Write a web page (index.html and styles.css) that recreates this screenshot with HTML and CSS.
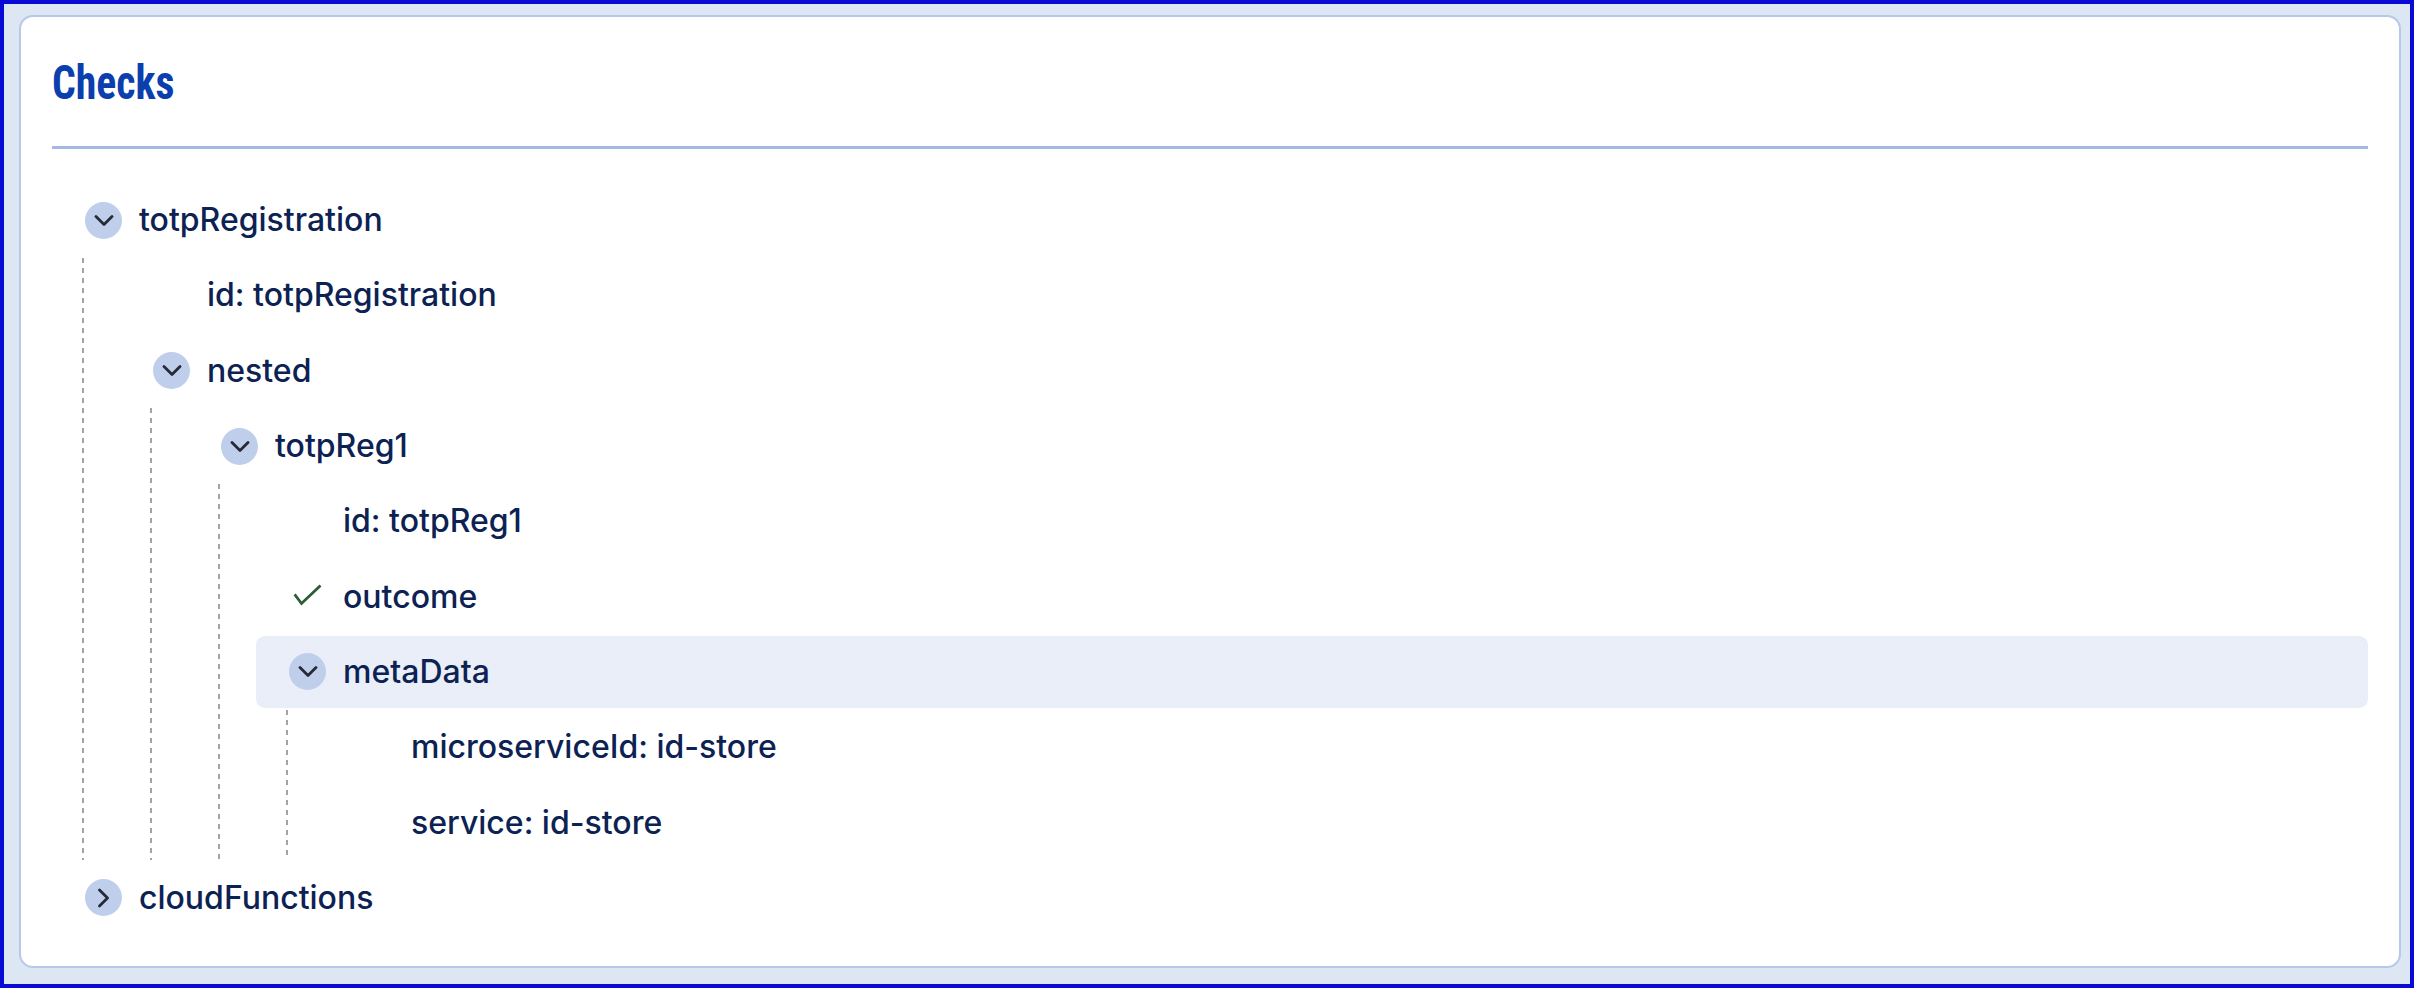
FILE: index.html
```html
<!DOCTYPE html>
<html>
<head>
<meta charset="utf-8">
<link rel="stylesheet" href="styles.css">
</head>
<body>
<div class="frame">
  <section class="card">
    <header class="card-head">
      <h1 class="title">Checks</h1>
    </header>
    <div class="tree">
      <div class="row">
        <span class="toggle"><svg viewBox="0 0 20 11" class="chev"><path d="M2 1.5 L10 9.5 L18 1.5"/></svg></span>
        <span class="label">totpRegistration</span>
      </div>
      <div class="children">
        <div class="row">
          <span class="slot"></span>
          <span class="label">id: totpRegistration</span>
        </div>
        <div class="row">
          <span class="toggle"><svg viewBox="0 0 20 11" class="chev"><path d="M2 1.5 L10 9.5 L18 1.5"/></svg></span>
          <span class="label">nested</span>
        </div>
        <div class="children">
          <div class="row">
            <span class="toggle"><svg viewBox="0 0 20 11" class="chev"><path d="M2 1.5 L10 9.5 L18 1.5"/></svg></span>
            <span class="label">totpReg1</span>
          </div>
          <div class="children">
            <div class="row">
              <span class="slot"></span>
              <span class="label">id: totpReg1</span>
            </div>
            <div class="row">
              <span class="slot"><svg viewBox="0 0 36 36" class="check"><path d="M5.5 16.5 L11.5 24.5 L29.5 7.5"/></svg></span>
              <span class="label">outcome</span>
            </div>
            <div class="row selected">
              <span class="toggle"><svg viewBox="0 0 20 11" class="chev"><path d="M2 1.5 L10 9.5 L18 1.5"/></svg></span>
              <span class="label">metaData</span>
            </div>
            <div class="children">
              <div class="row">
                <span class="slot"></span>
                <span class="label">microserviceId: id-store</span>
              </div>
              <div class="row">
                <span class="slot"></span>
                <span class="label">service: id-store</span>
              </div>
            </div>
          </div>
        </div>
      </div>
      <div class="row">
        <span class="toggle"><svg viewBox="0 0 11 20" class="chev-r"><path d="M1.5 2 L9.5 10 L1.5 18"/></svg></span>
        <span class="label">cloudFunctions</span>
      </div>
    </div>
  </section>
</div>
</body>
</html>
```

FILE: styles.css
```css
html, body {
  margin: 0;
  padding: 0;
  background: #0000d8;
}
body {
  width: 2414px;
  height: 988px;
  box-sizing: border-box;
  border: 4px solid #0a0ad6;
  background: #dde7f4;
}
.frame {
  padding: 11px 9px 16px 15px;
  height: 100%;
  box-sizing: border-box;
}
.card {
  box-sizing: border-box;
  height: 100%;
  background: #ffffff;
  border: 2px solid #b6c9ea;
  border-radius: 14px;
  padding: 0 31px 0 31px;
}
.card-head {
  padding-top: 42px;
  padding-bottom: 39px;
  border-bottom: 3px solid #a3b9e1;
}
.title {
  margin: 0;
  font-family: "Roboto", "Liberation Sans", sans-serif;
  font-weight: 700;
  font-stretch: 75%;
  font-size: 48px;
  line-height: 48px;
  color: #0b3fae;
  transform: scaleX(0.87);
  transform-origin: left center;
}
.tree {
  padding-top: 33.5px;
  font-family: "Inter", "Noto Sans", sans-serif;
  font-size: 32px;
  font-weight: 500;
  color: #0c2253;
}
.row {
  display: flex;
  align-items: center;
  height: 75.3px;
  box-sizing: border-box;
  padding-left: 33px;
  border-top: 2px solid transparent;
  border-bottom: 2px solid transparent;
  background-clip: padding-box;
  border-radius: 10px;
}
.row.selected {
  background-color: #e9eef8;
}
.toggle, .slot {
  flex: none;
  width: 37px;
  height: 37px;
  margin-right: 17px;
  display: flex;
  align-items: center;
  justify-content: center;
}
.toggle {
  border-radius: 50%;
  background: #bfcfeb;
}
.chev {
  width: 20px;
  height: 11px;
  fill: none;
  stroke: #262a36;
  stroke-width: 2.8;
  stroke-linecap: round;
  stroke-linejoin: round;
}
.chev-r {
  width: 11px;
  height: 20px;
  fill: none;
  stroke: #262a36;
  stroke-width: 2.8;
  stroke-linecap: round;
  stroke-linejoin: round;
}
.check {
  width: 36px;
  height: 36px;
  fill: none;
  stroke: #2b5d36;
  stroke-width: 2.8;
  stroke-linecap: square;
}
.label {
  white-space: nowrap;
  line-height: 1;
}
.children {
  padding-left: 68px;
  background-image: repeating-linear-gradient(to bottom, #a3a3a3 0 5px, transparent 5px 10px);
  background-repeat: no-repeat;
  background-size: 2px 100%;
  background-position: 30px 0;
}
```
